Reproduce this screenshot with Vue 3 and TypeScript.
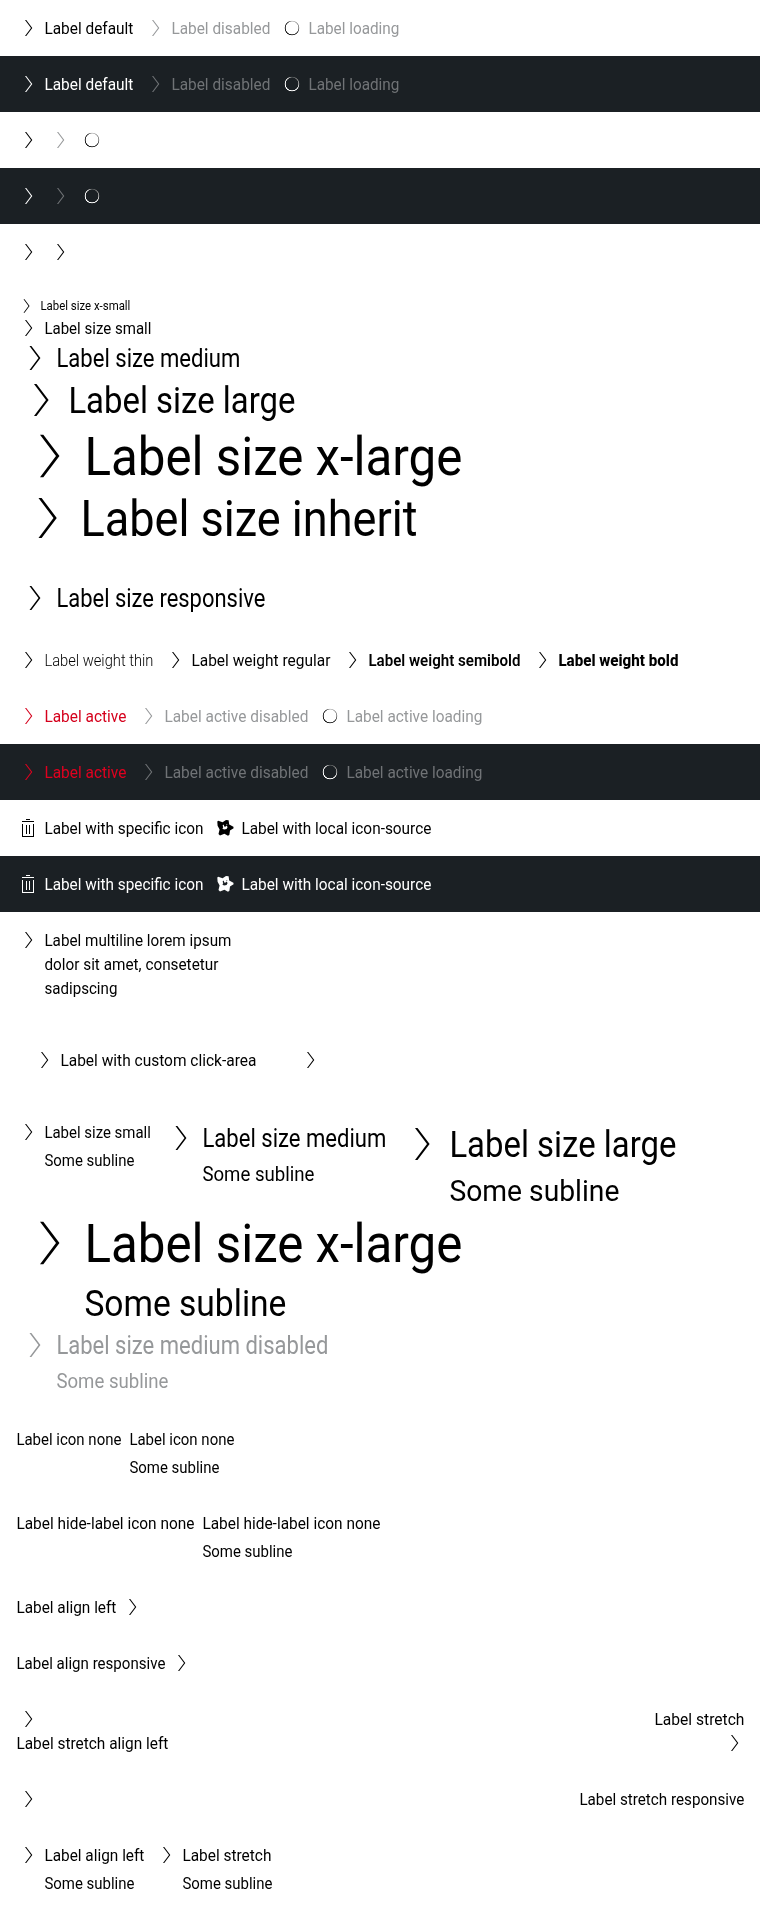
<script setup lang="ts">
import { nextTick, onMounted, ref } from 'vue'

type IconName = 'arrow' | 'spinner' | 'trash' | 'star' | 'none'
type Size = 'xs' | 'sm' | 'md' | 'lg' | 'xl' | 'inherit'

interface Line {
  text: string
  width: number
}

interface Item {
  lines: Line[]
  sub?: Line
  icon?: IconName
  size?: Size
  tone?: 'muted' | 'active'
  weight?: 'thin' | 'semibold' | 'bold'
  reverse?: boolean
  padded?: boolean
}

interface Section {
  dark?: boolean
  layout?: 'stack' | 'mixed' | 'click' | 'tight'
  items: Item[]
}

const one = (text: string, width: number, rest: Partial<Item> = {}): Item => ({
  lines: [{ text, width }],
  ...rest,
})
const bare = (icon: IconName = 'arrow', tone?: 'muted'): Item => ({ lines: [], icon, tone })
const sub = (width: number): Line => ({ text: 'Some subline', width })

const states = (): Item[] => [
  one('Label default', 89),
  one('Label disabled', 99, { tone: 'muted' }),
  one('Label loading', 91, { tone: 'muted', icon: 'spinner' }),
]
const hidden = (): Item[] => [bare(), bare('arrow', 'muted'), bare('spinner')]
const actives = (): Item[] => [
  one('Label active', 82, { tone: 'active' }),
  one('Label active disabled', 144, { tone: 'muted' }),
  one('Label active loading', 136, { tone: 'muted', icon: 'spinner' }),
]
const icons = (): Item[] => [
  one('Label with specific icon', 159, { icon: 'trash' }),
  one('Label with local icon-source', 190, { icon: 'star' }),
]

const upper: Section[] = [
  { items: states() },
  { dark: true, items: states() },
  { layout: 'tight', items: hidden() },
  { dark: true, layout: 'tight', items: hidden() },
  { layout: 'tight', items: [bare(), bare()] },
  {
    layout: 'stack',
    items: [
      one('Label size x-small', 90, { size: 'xs' }),
      one('Label size small', 107),
      one('Label size medium', 184, { size: 'md' }),
      one('Label size large', 227, { size: 'lg' }),
      one('Label size x-large', 378, { size: 'xl' }),
      one('Label size inherit', 337, { size: 'inherit' }),
    ],
  },
  { items: [one('Label size responsive', 209, { size: 'md' })] },
  {
    items: [
      one('Label weight thin', 109, { weight: 'thin' }),
      one('Label weight regular', 139),
      one('Label weight semibold', 152, { weight: 'semibold' }),
      one('Label weight bold', 120, { weight: 'bold' }),
    ],
  },
  { items: actives() },
  { dark: true, items: actives() },
  { items: icons() },
  { dark: true, items: icons() },
  {
    items: [
      {
        lines: [
          { text: 'Label multiline lorem ipsum', width: 187 },
          { text: 'dolor sit amet, consetetur', width: 174 },
          { text: 'sadipscing', width: 73 },
        ],
      },
    ],
  },
  {
    layout: 'click',
    items: [
      one('Label with custom click-area', 196, { padded: true }),
      { lines: [], padded: true },
    ],
  },
  {
    layout: 'mixed',
    items: [
      one('Label size small', 106.5, { sub: sub(90) }),
      one('Label size medium', 184, { size: 'md', sub: sub(112) }),
      one('Label size large', 227, { size: 'lg', sub: sub(170) }),
      one('Label size x-large', 378, { size: 'xl', sub: sub(202) }),
      one('Label size medium disabled', 272, { size: 'md', tone: 'muted', sub: sub(112) }),
    ],
  },
  {
    layout: 'tight',
    items: [
      one('Label icon none', 105, { icon: 'none' }),
      one('Label icon none', 105, { icon: 'none', sub: sub(90) }),
    ],
  },
  {
    layout: 'tight',
    items: [
      one('Label hide-label icon none', 178, { icon: 'none' }),
      one('Label hide-label icon none', 178, { icon: 'none', sub: sub(90) }),
    ],
  },
  { items: [one('Label align left', 100, { reverse: true })] },
  { items: [one('Label align responsive', 149, { reverse: true })] },
]

const lower: Section[] = [
  {
    items: [
      one('Label align left', 100, { sub: sub(90) }),
      one('Label stretch', 89, { sub: sub(90) }),
    ],
  },
]

const root = ref<HTMLElement | null>(null)

function fitText(): void {
  root.value?.querySelectorAll<HTMLElement>('[data-width]').forEach((el) => {
    el.style.transform = 'none'
    const natural = el.getBoundingClientRect().width
    if (natural > 0) {
      el.style.transform = `scaleX(${Number(el.dataset.width) / natural})`
    }
  })
}

onMounted(async () => {
  await nextTick()
  fitText()
  document.fonts.ready.then(fitText)
})
</script>

<template>
  <main ref="root" class="page">
    <svg class="defs" aria-hidden="true">
      <symbol id="i-arrow" viewBox="0 0 24 24">
        <path d="M9 4h1.25l6.05 8-6.05 8H9l6-8z" fill="currentColor" />
      </symbol>
      <symbol id="i-trash" viewBox="0 0 24 24">
        <path
          d="M10 3h4v1h-4zM6 5h12v1H6zM6 8h1v12h10V8h1v13H6zM10 9h1v9h-1zM13 9h1v9h-1z"
          fill="currentColor"
        />
      </symbol>
      <symbol id="i-star" viewBox="0 0 24 24">
        <path
          fill-rule="evenodd"
          fill="currentColor"
          d="M4.3 5.6L5.2 4.8 9.6 6.2 13 4 15.6 4.3 16.2 8.6 20.4 10.8 20.6 12.2 17 14.4 16.4 18.8 15 19.8 11.4 17.8 7 19.4 5.5 18 6.6 13.6 4.6 9.8zM10.8 8.6L9.6 9.6 10.2 11.2 9.4 12.4 11 13.6 13.6 13 14.6 11 13.4 9.4 12.4 10.8 11.2 10.4zM13 8l1.4.2-.4.8z"
        />
      </symbol>
    </svg>

    <template v-for="(group, g) in [upper, lower]" :key="g">
      <template v-if="g === 1">
        <section class="stretch">
          <div class="between">
            <svg class="icon"><use href="#i-arrow" /></svg>
            <span class="fit" :style="{ width: '90.5px' }"><span data-width="90">Label stretch</span></span>
          </div>
          <div class="between">
            <span class="fit" :style="{ width: '153px' }"><span data-width="152">Label stretch align left</span></span>
            <svg class="icon outdent"><use href="#i-arrow" /></svg>
          </div>
        </section>
        <section class="stretch">
          <div class="between">
            <svg class="icon"><use href="#i-arrow" /></svg>
            <span class="fit" :style="{ width: '165.5px' }"><span data-width="165">Label stretch responsive</span></span>
          </div>
        </section>
      </template>

      <section v-for="(s, i) in group" :key="i" class="row" :class="[s.layout, { dark: s.dark }]">
        <div
          v-for="(item, j) in s.items"
          :key="j"
          class="item"
          :class="[item.size ?? 'sm', item.tone, item.weight, { reverse: item.reverse, padded: item.padded }]"
        >
          <template v-if="item.icon !== 'none'">
            <span v-if="item.icon === 'spinner'" class="icon"><i class="ring" /></span>
            <svg v-else class="icon"><use :href="`#i-${item.icon ?? 'arrow'}`" /></svg>
          </template>
          <div v-if="item.lines.length" class="text">
            <span v-for="l in item.lines" :key="l.text" class="fit" :style="{ width: `${l.width}px` }">
              <span :data-width="l.width">{{ l.text }}</span>
            </span>
            <span v-if="item.sub" class="fit sub" :style="{ width: `${item.sub.width}px` }">
              <span :data-width="item.sub.width">{{ item.sub.text }}</span>
            </span>
          </div>
        </div>
      </section>
    </template>
  </main>
</template>

<style>
html,
body {
  margin: 0;
  background: #fff;
}
</style>

<style scoped>
.page {
  width: 760px;
  color: #000;
  font-family: Roboto, 'Liberation Sans', sans-serif;
  font-size: 16.6px;
  line-height: 24px;
}
.defs {
  display: none;
}
.row,
.stretch {
  box-sizing: border-box;
  padding: 16px;
}
.row {
  display: flex;
  align-items: flex-start;
  gap: 10px;
}
.row.tight {
  gap: 8px;
}
.row.stack {
  flex-direction: column;
  gap: 0;
}
.row.mixed {
  flex-wrap: wrap;
  gap: 0 11px;
}
.row.click {
  gap: 10px;
}
.dark {
  background: #1b2024;
  color: #fff;
}
.item {
  --box: 24px;
  display: flex;
  gap: 4px;
  align-items: flex-start;
  line-height: var(--box);
}
.item.reverse {
  flex-direction: row-reverse;
}
.item.padded {
  padding: 16px;
}
.icon {
  flex: none;
  display: block;
  width: var(--box, 24px);
  height: var(--box, 24px);
}
.text {
  display: flex;
  flex-direction: column;
}
.fit {
  display: block;
  white-space: nowrap;
  transform: translate(0.4px, 1px);
}
.fit > span {
  display: inline-block;
  transform-origin: 0 50%;
}
.sub {
  margin-top: 4px;
  line-height: 24px;
}
.xs .fit,
.lg .fit,
.xl .fit,
.md .sub {
  transform: translate(0.4px, 0);
}
.xs {
  --box: 20px;
  font-size: 12.4px;
}
.md {
  --box: 36px;
  font-size: 25px;
}
.md .sub {
  font-size: 21px;
  line-height: 28px;
}
.lg {
  --box: 48px;
  font-size: 37.6px;
}
.lg .sub {
  font-size: 29.4px;
  line-height: 39px;
}
.xl {
  --box: 64px;
  font-size: 54.5px;
}
.xl .sub {
  font-size: 37.6px;
  line-height: 48px;
}
.inherit {
  --box: 60px;
  font-size: 50.3px;
}
.thin {
  font-weight: 300;
}
.semibold {
  font-weight: 600;
}
.bold {
  font-weight: 800;
}
.muted {
  color: #96989a;
}
.dark .muted {
  color: #707376;
}
.active {
  color: #d5001c;
}
.dark .active {
  color: #e0001f;
}
.ring {
  display: block;
  box-sizing: border-box;
  width: 16px;
  height: 16px;
  margin: 4px;
  border-radius: 50%;
  background: conic-gradient(#ccc, #aaa 15%, #555 35%, #222 55%, #222 75%, #666 92%, #ccc);
  -webkit-mask: radial-gradient(circle closest-side, transparent 6.1px, #000 6.6px, #000 7.1px, transparent 7.6px);
  mask: radial-gradient(circle closest-side, transparent 6.1px, #000 6.6px, #000 7.1px, transparent 7.6px);
}
.dark .ring {
  background: conic-gradient(#44484b, #777 15%, #ddd 35%, #fff 50%, #fff 75%, #bbb 92%, #44484b);
}
.between {
  display: flex;
  justify-content: space-between;
}
.outdent {
  margin-right: -2px;
}
</style>
